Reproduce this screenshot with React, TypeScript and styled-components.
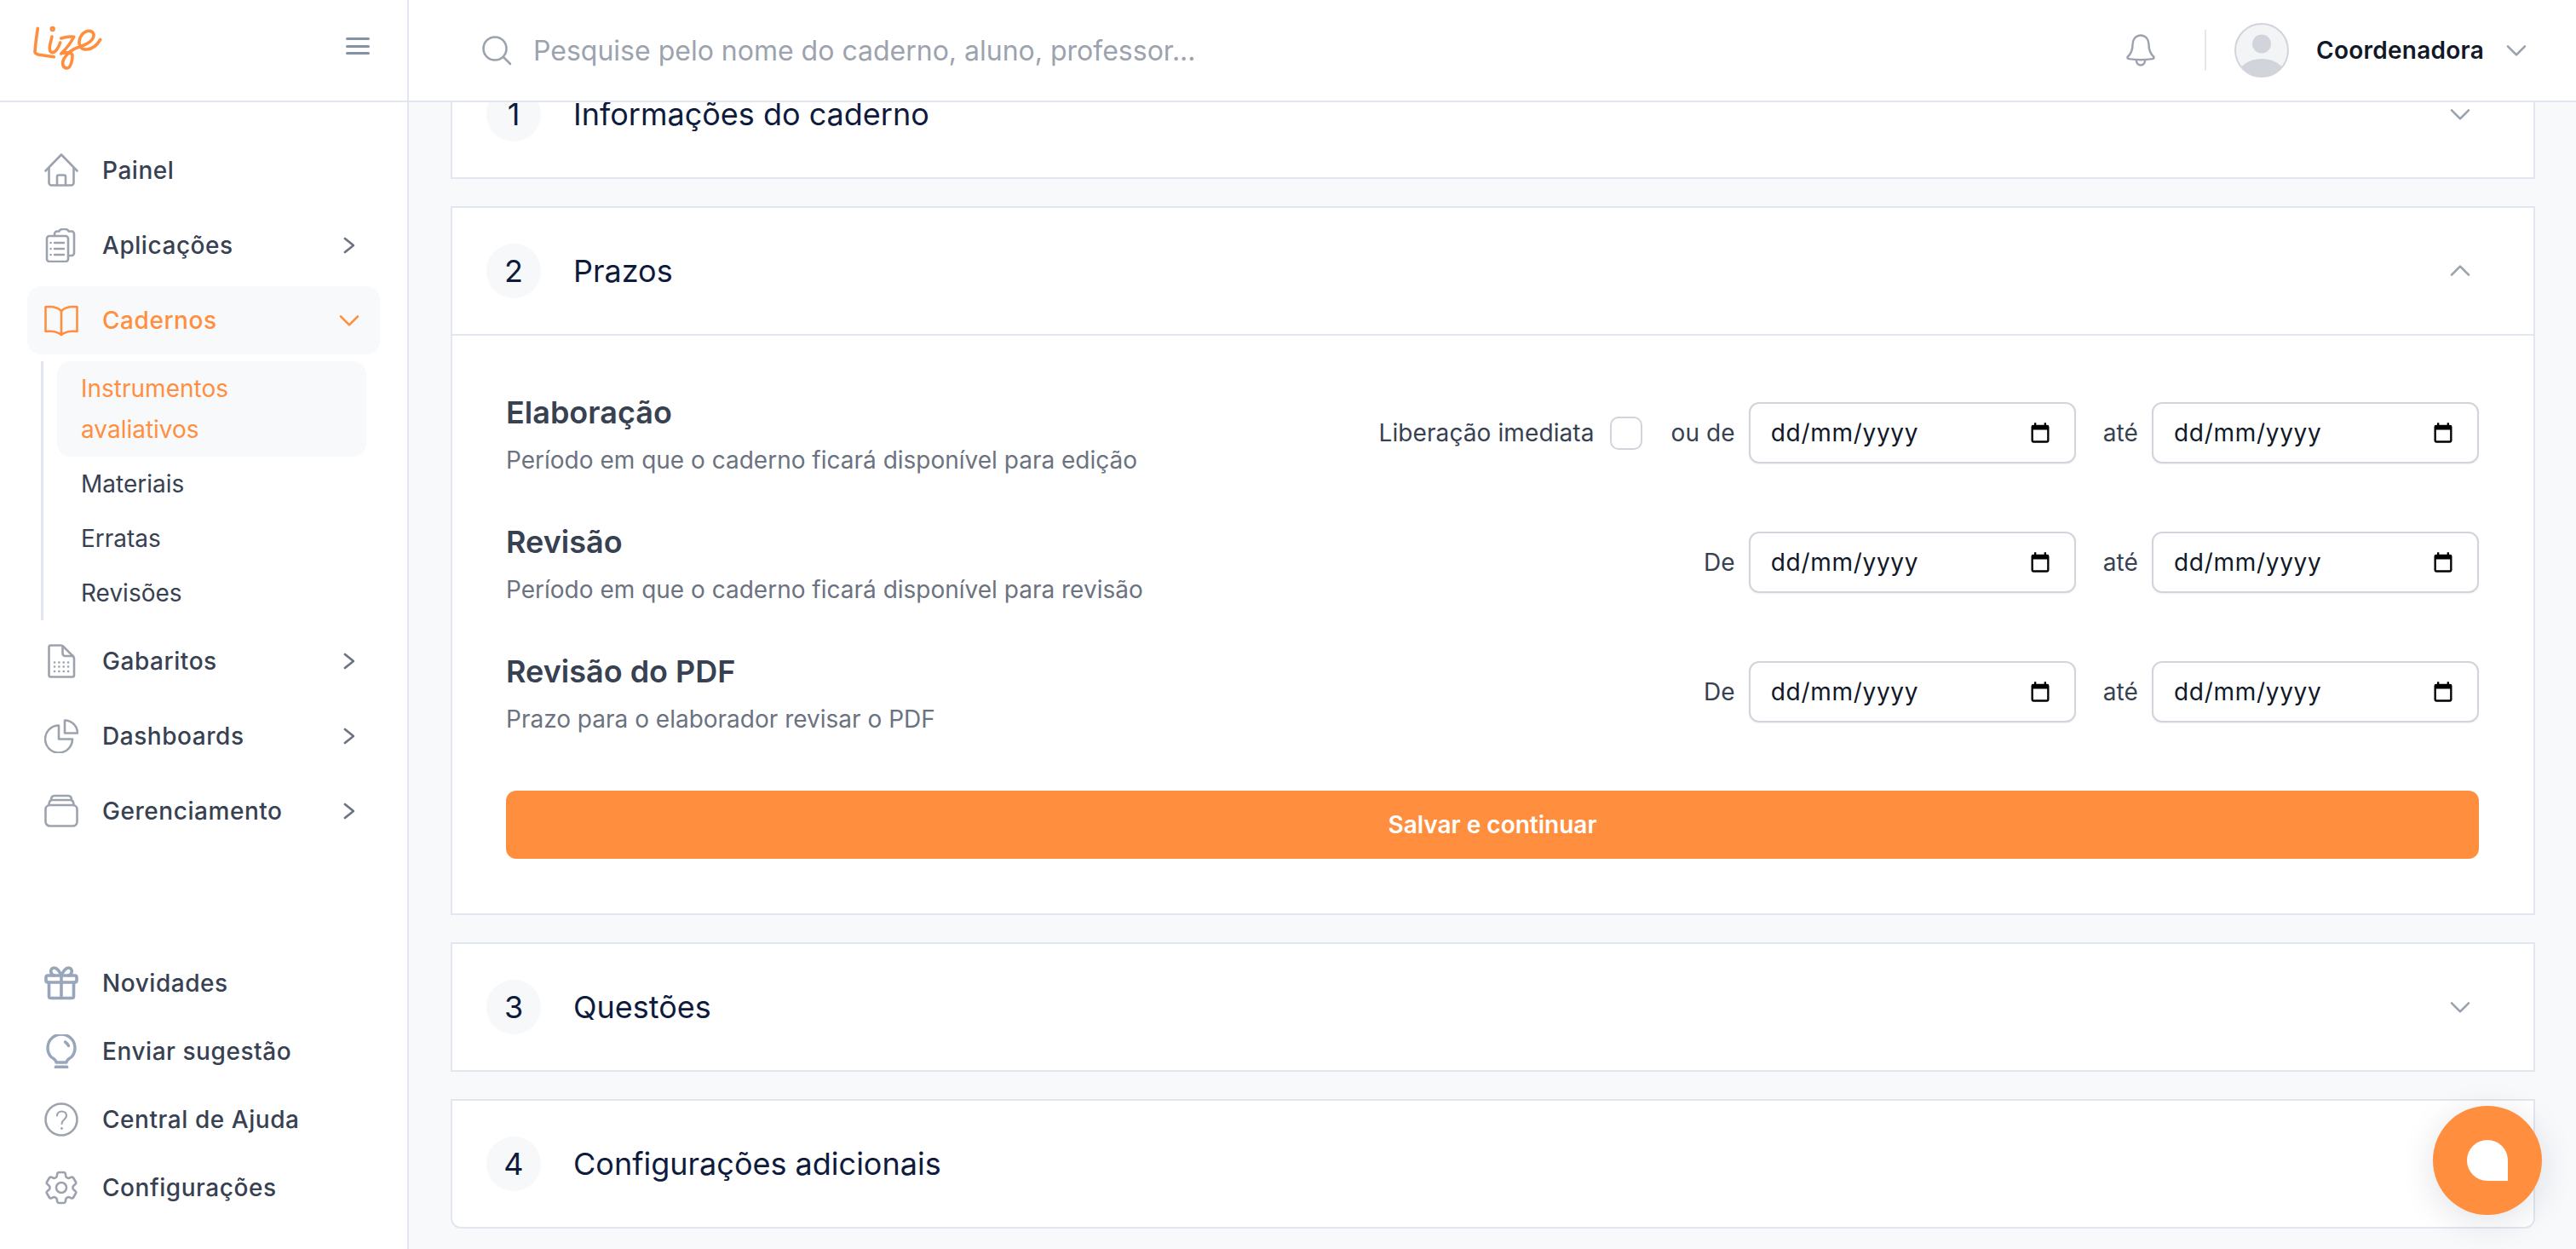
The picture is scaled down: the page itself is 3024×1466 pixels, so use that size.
import { ReactNode } from "react";
import styled, { createGlobalStyle } from "styled-components";

const orange = "#ff8f3f";
const line = "#e2e6ee";

const GlobalStyle = createGlobalStyle`
  html, body {
    margin: 0;
    padding: 0;
    background: #f8f9fb;
    font-family: Inter, "Liberation Sans", sans-serif;
  }
  * {
    box-sizing: border-box;
  }
`;

const Stroke = ({ children, color = "#9ca3af" }: { children: ReactNode; color?: string }) => (
  <svg width="40" height="40" viewBox="0 0 40 40" fill="none" stroke={color} strokeWidth="2.6" strokeLinecap="round" strokeLinejoin="round">
    {children}
  </svg>
);

const icons: Record<string, ReactNode> = {
  home: (
    <Stroke>
      <path d="M1.500 20.500 20 1.500l18.500 19" />
      <path d="M5.500 17v17.500a3 3 0 0 0 3 3h23a3 3 0 0 0 3-3V17" />
      <path d="M15 37V27.500a2 2 0 0 1 2-2h6a2 2 0 0 1 2 2V37" />
    </Stroke>
  ),
  clipboard: (
    <Stroke>
      <path d="M12 9V6.500a3 3 0 0 1 3-3h2.500C18 1.500 19.500.8 23 .8s5 .7 5.500 2.700H32a3 3 0 0 1 3 3V29a3 3 0 0 1-3 3h-3" />
      <rect x="3" y="9" width="25" height="30" rx="3" />
      <path d="M12 17h11M12 24h11M12 31h11" strokeWidth="2.400" />
      <path d="M7.500 17h.2M7.500 24h.2M7.500 31h.2" strokeWidth="2.400" />
    </Stroke>
  ),
  book: (
    <Stroke color={orange}>
      <path d="M20 9C15 4 8 3.500 1.500 4.200V33c6.500-.7 13.500 0 18.500 4 5-4 12-4.700 18.500-4V4.200C32 3.500 25 4 20 9Z" />
      <path d="M20 9v28" />
    </Stroke>
  ),
  sheet: (
    <Stroke>
      <path d="M7.500 1.500h12c1 0 2 .5 3 1.500l11 11c1 1 1.500 2 1.500 3v19.500a2 2 0 0 1-2 2H7.500a2 2 0 0 1-2-2v-33a2 2 0 0 1 2-2Z" />
      <path d="M21.500 2.500V11a3 3 0 0 0 3 3H34" />
      <path d="M12 21.500h.1M17.300 21.500h.1M22.700 21.500h.1M28 21.500h.1M12 26.500h.1M17.300 26.500h.1M22.700 26.500h.1M28 26.500h.1M12 32h.1M17.300 32h.1M22.700 32h.1M28 32h.1" strokeWidth="2.600" />
    </Stroke>
  ),
  pie: (
    <Stroke>
      <path d="M17 7.500a16 16 0 1 0 16 16H17V7.500Z" />
      <path d="M24 1.500a15 15 0 0 1 15 15H24V1.500Z" />
    </Stroke>
  ),
  drawers: (
    <Stroke>
      <rect x="1.500" y="13" width="37" height="24.500" rx="5" />
      <path d="M5.500 13c0-4 1-6 4-6h21c3 0 4 2 4 6" />
      <path d="M8 7c0-3 1-5 4-5h16c3 0 4 2 4 5" />
    </Stroke>
  ),
  gift: (
    <Stroke color="#97a6ba">
      <g strokeWidth="3.600">
        <rect x="2" y="11" width="36" height="8" rx="2" />
        <path d="M5.500 19v16.500a2 2 0 0 0 2 2h25a2 2 0 0 0 2-2V19" />
        <path d="M20 11v26.500" />
        <path d="M20 11c-2-4-4-9-8.500-9C6 2 7 10 11.500 11M20 11c2-4 4-9 8.500-9C34 2 33 10 28.500 11" />
      </g>
    </Stroke>
  ),
  bulb: (
    <Stroke color="#97a6ba">
      <g strokeWidth="3.400">
        <path d="M14 33c0-3-3-4-6.500-7A16 16 0 1 1 32.500 26C29 29 26 30 26 33H14Z" />
        <path d="M13.500 38.500h13" strokeWidth="3.800" />
        <path d="M24.500 9c1.500 1 3 2.500 4 4.500" />
      </g>
    </Stroke>
  ),
  help: (
    <Stroke>
      <circle cx="20" cy="20" r="18.500" />
      <path d="M15 15.500c0-3 2.500-5 5.500-5s5.500 2 5.500 5c0 4.500-5.500 4.500-5.500 9.500" strokeWidth="2.200" />
      <path d="M20.500 30.500v.1" strokeWidth="2.800" />
    </Stroke>
  ),
  gear: (
    <Stroke>
      <g transform="translate(-4 -4) scale(2)" strokeWidth="1.300">
        <path d="M9.594 3.940c.09-.542.56-.94 1.110-.94h2.593c.55 0 1.020.398 1.110.94l.213 1.281c.063.374.313.686.645.870.074.040.147.083.220.127.324.196.720.257 1.075.124l1.217-.456a1.125 1.125 0 0 1 1.370.490l1.296 2.247a1.125 1.125 0 0 1-.260 1.431l-1.003.827c-.293.240-.438.613-.431.992a6.759 6.759 0 0 1 0 .255c-.007.378.138.750.430.990l1.005.828c.424.350.534.954.260 1.430l-1.298 2.247a1.125 1.125 0 0 1-1.369.491l-1.217-.456c-.355-.133-.750-.072-1.076.124a6.570 6.570 0 0 1-.220.128c-.331.183-.581.495-.644.869l-.213 1.280c-.09.543-.56.941-1.110.941h-2.594c-.55 0-1.020-.398-1.110-.940l-.213-1.281c-.062-.374-.312-.686-.644-.870a6.520 6.520 0 0 1-.220-.127c-.325-.196-.720-.257-1.076-.124l-1.217.456a1.125 1.125 0 0 1-1.369-.490l-1.297-2.247a1.125 1.125 0 0 1 .260-1.431l1.004-.827c.292-.240.437-.613.430-.992a6.932 6.932 0 0 1 0-.255c.007-.378-.138-.750-.430-.990l-1.004-.828a1.125 1.125 0 0 1-.260-1.430l1.297-2.247a1.125 1.125 0 0 1 1.370-.491l1.216.456c.356.133.751.072 1.076-.124.072-.044.146-.087.220-.128.332-.183.582-.495.644-.869l.214-1.281Z" />
        <circle cx="12" cy="12" r="3" />
      </g>
    </Stroke>
  ),
};

const Chevron = ({ dir, color, weight = 2 }: { dir: "up" | "down" | "right"; color: string; weight?: number }) => {
  const d = dir === "right" ? "M8.200 6l7.500 6-7.500 6" : dir === "up" ? "M4.500 15.500L12 8l7.500 7.500" : "M4.500 8.500L12 16l7.500-7.500";
  return (
    <svg width="32" height="32" viewBox="0 0 24 24" fill="none" stroke={color} strokeWidth={weight} strokeLinecap="round" strokeLinejoin="round">
      <path d={d} />
    </svg>
  );
};

const CalendarIcon = () => (
  <svg width="28" height="28" viewBox="0 0 24 24" fill="#000">
    <path d="M19 4h-1V2h-2v2H8V2H6v2H5a2 2 0 0 0-2 2v14a2 2 0 0 0 2 2h14a2 2 0 0 0 2-2V6a2 2 0 0 0-2-2Zm0 16H5V9h14v11Z" />
  </svg>
);

const Logo = () => (
  <svg width="100" height="70" viewBox="0 0 100 70" fill="none" stroke={orange} strokeWidth="3.600" strokeLinecap="round" strokeLinejoin="round">
    <path d="M14.300 13.300C13 22 11.500 33 11 41c0 2 2 2.600 5 3.200l17.300 2.500" />
    <path d="M31 23c-1 5-3 10-2.700 14 .2 6 5 6 8.400 1 2-2.500 3-5 4-8" />
    <circle cx="31.700" cy="14" r="1.400" />
    <path d="M41.700 25c5-1.500 10-2.500 15-1.700-3 6-10 15-15 19.700 5-1.700 13-2 13.300 2 .3 6-2.500 15-6 15-5 0-7-5-4-11 4-7 12-12 18-14 6-1.500 16-6 17-13 .5-4-3-6-7-5.500-5 .7-9.500 6-10 12-.5 6 3 10 9 9.500 6-.5 12-5 15.700-11.500" />
  </svg>
);

const Avatar = () => (
  <svg width="64" height="64" viewBox="0 0 64 64">
    <defs>
      <clipPath id="avatarClip">
        <circle cx="32" cy="32" r="31" />
      </clipPath>
    </defs>
    <circle cx="32" cy="32" r="31" fill="#f3f4f6" stroke="#d1d5db" strokeWidth="2" />
    <g clipPath="url(#avatarClip)" fill="#d1d5db">
      <circle cx="32" cy="24.500" r="11" />
      <ellipse cx="32" cy="66" rx="30" ry="24" />
    </g>
  </svg>
);

const DatePlaceholder = () => (
  <DateField>
    <span>dd/mm/yyyy</span>
    <CalendarIcon />
  </DateField>
);

const steps = [
  { n: 1, title: "Informações do caderno" },
  { n: 2, title: "Prazos", open: true },
  { n: 3, title: "Questões" },
  { n: 4, title: "Configurações adicionais" },
];

const deadlines = [
  { title: "Elaboração", text: "Período em que o caderno ficará disponível para edição", label: "ou de", immediate: true },
  { title: "Revisão", text: "Período em que o caderno ficará disponível para revisão", label: "De" },
  { title: "Revisão do PDF", text: "Prazo para o elaborador revisar o PDF", label: "De" },
];

const mainNav = [
  { icon: "home", label: "Painel" },
  { icon: "clipboard", label: "Aplicações", arrow: true },
  { icon: "book", label: "Cadernos", active: true },
];
const afterNav = [
  { icon: "sheet", label: "Gabaritos" },
  { icon: "pie", label: "Dashboards" },
  { icon: "drawers", label: "Gerenciamento" },
];
const bottomNav = [
  { icon: "gift", label: "Novidades" },
  { icon: "bulb", label: "Enviar sugestão" },
  { icon: "help", label: "Central de Ajuda" },
  { icon: "gear", label: "Configurações" },
];

const App = () => {
  return (
    <Shell>
      <GlobalStyle />
      <Sidebar>
        <Brand>
          <LogoSlot>
            <Logo />
          </LogoSlot>
          <Burger>
            <i />
            <i />
            <i />
          </Burger>
        </Brand>
        <Nav>
          {mainNav.map((item) => (
            <NavItem key={item.label} $active={item.active}>
              {icons[item.icon]}
              <NavLabel>{item.label}</NavLabel>
              {item.active && <Chevron dir="down" color={orange} />}
              {item.arrow && <Chevron dir="right" color="#6b7280" />}
            </NavItem>
          ))}
          <SubList>
            <SubItem $active>Instrumentos avaliativos</SubItem>
            <SubItem>Materiais</SubItem>
            <SubItem>Erratas</SubItem>
            <SubItem>Revisões</SubItem>
          </SubList>
          {afterNav.map((item) => (
            <NavItem key={item.label}>
              {icons[item.icon]}
              <NavLabel>{item.label}</NavLabel>
              <Chevron dir="right" color="#6b7280" />
            </NavItem>
          ))}
        </Nav>
        <BottomNav>
          {bottomNav.map((item) => (
            <NavItem key={item.label}>
              {icons[item.icon]}
              <NavLabel>{item.label}</NavLabel>
            </NavItem>
          ))}
        </BottomNav>
      </Sidebar>
      <Right>
        <TopBar>
          <SearchBox>
            <svg width="36" height="36" viewBox="0 0 36 36" fill="none" stroke="#9ca3af" strokeWidth="2.600" strokeLinecap="round">
              <circle cx="16" cy="16" r="13.500" />
              <path d="M26 26l8 8" />
            </svg>
            <SearchInput placeholder="Pesquise pelo nome do caderno, aluno, professor..." />
          </SearchBox>
          <Bell>
            <svg width="36" height="40" viewBox="0 0 38 40" fill="none" stroke="#9ca3af" strokeWidth="2.600" strokeLinecap="round" strokeLinejoin="round">
              <path d="M19 1.500c-6 0-10 5-10 11 0 8-2 12-6.500 16 0 1 .5 2 2 2.200 9.500 1.500 19.500 1.500 29 0 1.500-.2 2-1.200 2-2.200-4.500-4-6.500-8-6.500-16 0-6-4-11-10-11Z" />
              <path d="M13.500 32c0 4 2.500 6.500 5.500 6.500s5.500-2.500 5.500-6.500" />
            </svg>
          </Bell>
          <Divider />
          <Avatar />
          <UserName>Coordenadora</UserName>
          <Chevron dir="down" color="#9ca3af" />
        </TopBar>
        <Main>
          {steps.map((step) => (
            <Card key={step.n} $last={step.n === 4}>
              <CardHead $open={step.open}>
                <StepNumber>{step.n}</StepNumber>
                <StepTitle>{step.title}</StepTitle>
                <Chevron dir={step.open ? "up" : "down"} color="#9ca3af" />
              </CardHead>
              {step.open && (
                <CardBody>
                  {deadlines.map((row) => (
                    <DeadlineRow key={row.title}>
                      <RowIntro>
                        <RowTitle>{row.title}</RowTitle>
                        <RowText>{row.text}</RowText>
                      </RowIntro>
                      <Dates>
                        {row.immediate && (
                          <>
                            <FieldLabel>Liberação imediata</FieldLabel>
                            <Check />
                          </>
                        )}
                        <FieldLabel>{row.label}</FieldLabel>
                        <DatePlaceholder />
                        <Until>até</Until>
                        <DatePlaceholder />
                      </Dates>
                    </DeadlineRow>
                  ))}
                  <SaveButton>Salvar e continuar</SaveButton>
                </CardBody>
              )}
            </Card>
          ))}
        </Main>
      </Right>
      <ChatButton>
        <i />
      </ChatButton>
    </Shell>
  );
};

export default App;

const Shell = styled.div`
  display: flex;
  width: 100%;
  height: 100vh;
  overflow: hidden;
  background: #f8f9fb;
`;

const Sidebar = styled.aside`
  width: 480px;
  flex-shrink: 0;
  display: flex;
  flex-direction: column;
  background: #fff;
  border-right: 2px solid ${line};
`;

const Brand = styled.div`
  height: 120px;
  flex-shrink: 0;
  display: flex;
  align-items: flex-start;
  justify-content: space-between;
  padding: 20px 44px 0 30px;
  border-bottom: 2px solid ${line};
`;

const LogoSlot = styled.div`
  height: 70px;
`;

const Burger = styled.div`
  display: flex;
  flex-direction: column;
  gap: 5.5px;
  width: 28px;
  margin-top: 24px;

  & > i {
    display: block;
    height: 3px;
    border-radius: 2px;
    background: #8492a6;
  }
`;

const Nav = styled.nav`
  display: flex;
  flex-direction: column;
  gap: 8px;
  padding: 40px 32px 0;
`;

const BottomNav = styled.nav`
  display: flex;
  flex-direction: column;
  margin-top: auto;
  padding: 0 32px 32px;
`;

const NavItem = styled.div<{ $active?: boolean }>`
  height: 80px;
  display: flex;
  align-items: center;
  gap: 28px;
  padding: 0 20px;
  border-radius: 16px;
  font-size: 28px;
  font-weight: 500;
  color: ${({ $active }) => ($active ? orange : "#374151")};
  background: ${({ $active }) => ($active ? "#f8f9fb" : "transparent")};
`;

const NavLabel = styled.span`
  flex: 1;
  letter-spacing: 0.55px;
`;

const SubList = styled.div`
  margin-left: 16px;
  padding-left: 16px;
  border-left: 3px solid ${line};
  width: 382px;
`;

const SubItem = styled.div<{ $active?: boolean }>`
  padding: 8px 28px;
  font-size: 28px;
  line-height: 48px;
  border-radius: 16px;
  color: ${({ $active }) => ($active ? orange : "#374151")};
  background: ${({ $active }) => ($active ? "#f8f9fb" : "transparent")};
`;

const Right = styled.div`
  flex: 1;
  min-width: 0;
  display: flex;
  flex-direction: column;
`;

const TopBar = styled.header`
  height: 120px;
  flex-shrink: 0;
  position: relative;
  z-index: 2;
  display: flex;
  align-items: center;
  padding: 0 54px 0 85px;
  background: #fff;
  border-bottom: 2px solid ${line};
`;

const SearchBox = styled.div`
  flex: 1;
  display: flex;
  align-items: center;
  gap: 25px;
`;

const SearchInput = styled.input`
  flex: 1;
  border: 0;
  outline: 0;
  padding: 0;
  font-family: inherit;
  font-size: 32px;
  background: transparent;

  &::placeholder {
    color: #9ca3af;
    opacity: 1;
  }
`;

const Bell = styled.div`
  display: flex;
  margin-right: 57px;
`;

const Divider = styled.div`
  width: 2px;
  height: 48px;
  background: #e5e7eb;
  margin-right: 33px;
`;

const UserName = styled.span`
  margin: 0 22px 0 32px;
  font-size: 28px;
  font-weight: 600;
  letter-spacing: 0.25px;
  color: #111827;
`;

const Main = styled.main`
  flex: 1;
  min-height: 0;
  display: flex;
  flex-direction: column;
  gap: 32px;
  margin-top: -62px;
  padding: 0 48px 0 49px;
`;

const Card = styled.section<{ $last?: boolean }>`
  background: #fff;
  border: 2px solid ${line};
  border-radius: ${({ $last }) => ($last ? "0 0 12px 12px" : "0")};
`;

const CardHead = styled.div<{ $open?: boolean }>`
  height: ${({ $open }) => ($open ? "150px" : "148px")};
  display: flex;
  align-items: center;
  gap: 38px;
  padding: 0 70px 0 40px;
  border-bottom: ${({ $open }) => ($open ? `2px solid ${line}` : "0")};
`;

const StepNumber = styled.div`
  width: 64px;
  height: 64px;
  display: flex;
  align-items: center;
  justify-content: center;
  border-radius: 50%;
  background: #f7f8f9;
  font-size: 36px;
  color: #0f1b3d;
`;

const StepTitle = styled.h2`
  flex: 1;
  margin: 0;
  font-size: 36px;
  font-weight: 400;
  color: #0f1b3d;
`;

const CardBody = styled.div`
  display: flex;
  flex-direction: column;
  gap: 48px;
  padding: 62px 64px 64px 63px;
`;

const DeadlineRow = styled.div`
  display: flex;
  align-items: center;
  justify-content: space-between;
  height: 104px;
`;

const RowIntro = styled.div`
  align-self: flex-start;
`;

const RowTitle = styled.h3`
  margin: 0 0 4px;
  font-size: 36px;
  line-height: 56px;
  font-weight: 600;
  color: #374151;
`;

const RowText = styled.p`
  margin: 0;
  font-size: 28px;
  line-height: 48px;
  color: #6b7280;
`;

const Dates = styled.div`
  display: flex;
  align-items: center;
  gap: 16px;
`;

const FieldLabel = styled.span`
  font-size: 28px;
  letter-spacing: 0.1px;
  color: #374151;
`;

const Until = styled(FieldLabel)`
  margin-left: 16px;
`;

const Check = styled.div`
  width: 38px;
  height: 39px;
  margin: 0 18px 0 2px;
  border: 2px solid #d1d5db;
  border-radius: 10px;
  background: #fff;
`;

const DateField = styled.div`
  width: 384px;
  height: 72px;
  display: flex;
  align-items: center;
  justify-content: space-between;
  padding: 0 26px 0 24px;
  border: 2px solid #d1d5db;
  border-radius: 12px;
  box-shadow: 0 1px 2px rgba(0, 0, 0, 0.06);
  font-size: 28px;
  letter-spacing: 0.7px;
  color: #111827;
  background: #fff;
`;

const SaveButton = styled.button`
  height: 80px;
  margin-top: 16px;
  border: 0;
  border-radius: 12px;
  background: ${orange};
  color: #fff;
  font-family: inherit;
  font-size: 28px;
  font-weight: 600;
`;

const ChatButton = styled.div`
  position: fixed;
  right: 40px;
  bottom: 40px;
  z-index: 3;
  width: 128px;
  height: 128px;
  display: flex;
  align-items: center;
  justify-content: center;
  border-radius: 50%;
  background: ${orange};
  box-shadow: 0 8px 40px rgba(15, 27, 61, 0.12);

  & > i {
    display: block;
    width: 48px;
    height: 48px;
    border-radius: 50% 50% 0 50%;
    background: #fff;
  }
`;
